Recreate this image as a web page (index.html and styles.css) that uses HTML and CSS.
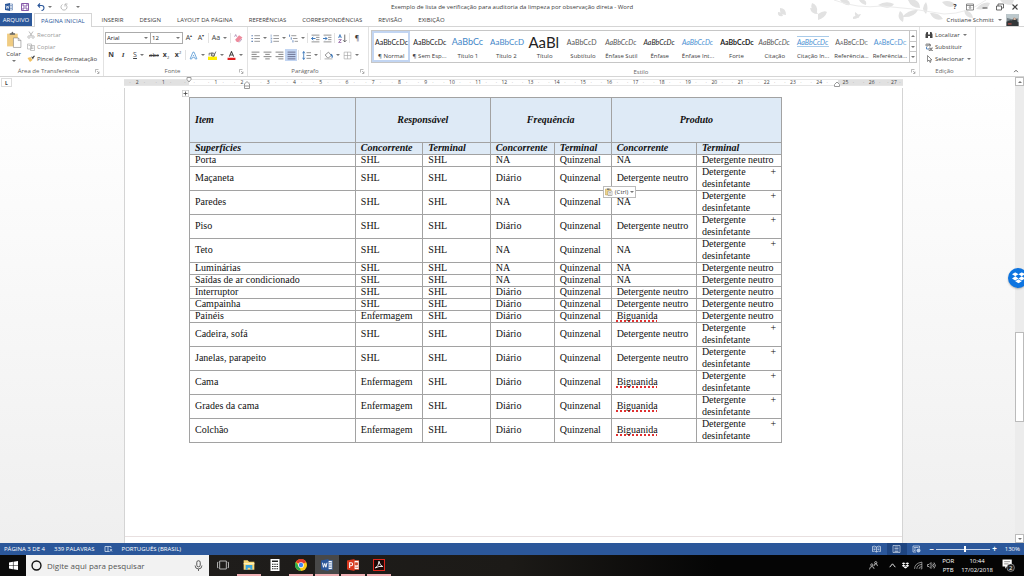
FILE: index.html
```html
<!DOCTYPE html>
<html lang="pt-BR">
<head>
<meta charset="utf-8">
<title>Exemplo de lista de verificação - Word</title>
<link rel="stylesheet" href="styles.css">
</head>
<body>
<svg class="defs" aria-hidden="true">
  <symbol id="lines-left" viewBox="0 0 16 16"><path d="M1 2h14M1 6h9M1 10h14M1 14h9" stroke="#666" stroke-width="1.4"/></symbol>
  <symbol id="word" viewBox="0 0 16 16"><path d="M9 2h6v12H9z" fill="#fff" stroke="#2b579a"/><path d="M10 5h4M10 8h4M10 11h4" stroke="#2b579a"/><path d="M0 2l10-2v16L0 14z" fill="#2b579a"/><path d="M2 5l1.300 6L5 6l1.500 5L8 5" fill="none" stroke="#fff" stroke-width="1.300"/></symbol>
  <symbol id="dropbox" viewBox="0 0 20 18"><path d="M5 0l5 3.200-5 3.200L0 3.200zM15 0l5 3.200-5 3.200-5-3.200zM5 6.400l5 3.200-5 3.200-5-3.200zM15 6.400l5 3.200-5 3.200-5-3.200zM10 10.800l5 3.200-5 3.200-5-3.200z" fill="#fff"/></symbol>
  <symbol id="launcher" viewBox="0 0 10 10"><path d="M1 7V1h6M4 4l4 4M8 5v4H4" fill="none" stroke="#777"/></symbol>
</svg>

<header class="window-head">
  <svg class="foliage" viewBox="0 0 260 27" aria-hidden="true">
    <g fill="#e2e2e2">
      <path d="M16 8q6 0 6 7q-7 0-6-7M14 12q4 0 5 4q-6 1-5-4M48 3q6 2 5 9q-8-2-5-9M46 8q5 0 8 6q-7 0-8-6M54 14q6-4 9-2q-2 6-9 8zM91 12q4 2 4 6q-5-1-4-6M89 17q5-3 8-3q-2 5-8 5M76 0q4 6 10 5q0-4-3-5zM95 0q2 4 7 5q1-4-2-5z"/>
      <path d="M114 5q8-5 16-1q-5 7-16 1M136 11q5 3 3 11q-7-4-3-11M138 17q7-8 16-7q-4 8-16 7M144 0q3 8 12 8q0-6-5-8zM162 2q3 6 0 12q-6-5 0-12M166 13q9-1 13 6q-9 3-13-6M178 2q8-3 14 3q-8 5-14-3M200 10q8 1 9 8q-8 0-9-8M212 9q7-8 14-6q-2 8-14 6M236 0q3 5 12 5l2-5z"/>
    </g>
    <path d="M70 0q24 9 48 6q30 2 62 8q23 0 42-14" fill="none" stroke="#ececec"/>
  </svg>
  <div class="titlebar">
    <div class="quick">
      <svg viewBox="0 0 16 16"><use href="#word"/></svg>
      <button aria-label="Salvar"><svg viewBox="0 0 16 16"><path d="M1 1h14v14H1zM4 1v5h8V1M4 15v-5h8v5" fill="none" stroke="#7a4aa0" stroke-width="1.800"/></svg></button>
      <button class="wide" aria-label="Desfazer"><svg viewBox="0 0 16 16"><path d="M6 1L2 5l4 4M2 5h7q5 0 5 5t-5 5" fill="none" stroke="#2b579a" stroke-width="2.200"/></svg><i class="caret"></i></button>
      <button aria-label="Repetir"><svg viewBox="0 0 16 16"><path d="M5 3a6 6 0 1 0 6 0M10 7V2h5" fill="none" stroke="#aaa" stroke-width="1.600"/></svg></button>
      <button aria-label="Personalizar"><i class="caret"></i></button>
    </div>
    <h1>Exemplo de lista de verificação para auditoria da limpeza por observação direta - Word</h1>
    <div class="winbtns">
      <button aria-label="Ajuda"><b>?</b></button>
      <button aria-label="Opções da faixa"><svg viewBox="0 0 16 16"><path d="M1 2h14v12H1zM1 5h14M8 12V7M6 9l2-2 2 2" fill="none" stroke="#555" stroke-width="1.300"/></svg></button>
      <button aria-label="Minimizar"><svg viewBox="0 0 16 16"><path d="M3 10h10" stroke="#444" stroke-width="2"/></svg></button>
      <button aria-label="Restaurar"><svg viewBox="0 0 16 16"><path d="M1 6h10v8H1zM4 6V2h11v8h-4" fill="none" stroke="#444" stroke-width="1.600"/></svg></button>
      <button aria-label="Fechar"><svg viewBox="0 0 16 16"><path d="M3 3l10 10M13 3L3 13" stroke="#444" stroke-width="2.200"/></svg></button>
    </div>
  </div>
  <nav class="tabs">
    <button class="file">ARQUIVO</button>
    <button class="active">PÁGINA INICIAL</button>
    <button>INSERIR</button>
    <button>DESIGN</button>
    <button>LAYOUT DA PÁGINA</button>
    <button>REFERÊNCIAS</button>
    <button>CORRESPONDÊNCIAS</button>
    <button>REVISÃO</button>
    <button>EXIBIÇÃO</button>
    <div class="user"><span>Cristiane Schmitt</span><i class="caret"></i>
      <svg viewBox="0 0 26 26"><path d="M0 0h26v26H0z" fill="#768288"/><path d="M0 0h26v9L14 12 0 8z" fill="#bcc8cc"/><path d="M0 17q7-5 12-3l4-6q6 0 7 8l3 2v8H0z" fill="#33383a"/><path d="M15 8h5v5h-5z" fill="#d9b6a2"/><path d="M3 20h8v3H3z" fill="#a54a45"/></svg>
    </div>
  </nav>
</header>

<section class="ribbon">
  <div class="group clip">
    <div class="body">
      <button class="paste"><svg viewBox="0 0 30 32"><path d="M2 5h20v24H2z" fill="#f0cc82"/><path d="M7 7V4h3q2-5 4 0h3v3z" fill="#666"/><path d="M14 13h9l5 5v13H14z" fill="#fff" stroke="#777"/><path d="M23 13v5h5" fill="none" stroke="#777"/></svg><span>Colar</span><i class="caret"></i></button>
      <div class="stack">
        <button class="off"><svg viewBox="0 0 16 16"><path d="M4 1l6 9M12 1L6 10" stroke="#aaa" stroke-width="1.600"/><circle cx="4" cy="12" r="2.500" fill="none" stroke="#aaa" stroke-width="1.400"/><circle cx="12" cy="12" r="2.500" fill="none" stroke="#aaa" stroke-width="1.400"/></svg>Recortar</button>
        <button class="off"><svg viewBox="0 0 16 16"><path d="M1 2h8v10H1zM7 5h8v10H7zM9 8h4M9 11h4M3 5h3" fill="#fff" stroke="#aaa" stroke-width="1.300"/></svg>Copiar</button>
        <button class="brush"><svg viewBox="0 0 16 16"><path d="M1 6l5 8 5-4-4-6z" fill="#f0c060"/><path d="M8 3l4 6 1-3 3-4-2-1-3 3z" fill="#444"/></svg>Pincel de Formatação</button>
      </div>
    </div>
    <div class="caption"><span>Área de Transferência</span><svg><use href="#launcher"/></svg></div>
  </div>

  <div class="group font">
    <div class="body rows">
      <div class="row">
        <label class="pick face"><select aria-label="Fonte"><option>Arial</option></select><i class="caret"></i></label>
        <label class="pick size"><select aria-label="Tamanho"><option>12</option></select><i class="caret"></i></label>
        <button class="tool" aria-label="Aumentar">A<sup>▴</sup></button>
        <button class="tool" aria-label="Diminuir">A<sup>▾</sup></button>
        <hr>
        <button class="tool drop">Aa<i class="caret"></i></button>
        <hr>
        <button class="tool" aria-label="Limpar"><svg viewBox="0 0 16 16"><path d="M2 10l7-8 6 4-7 8H5z" fill="#ed8a9c"/><path d="M1 5l2-4 2 4M9 15l5-6" stroke="#855790" fill="none"/></svg></button>
      </div>
      <div class="row">
        <button class="tool"><b>N</b></button>
        <button class="tool"><em>I</em></button>
        <button class="tool drop"><u>S</u><i class="caret"></i></button>
        <button class="tool small"><s>abc</s></button>
        <button class="tool"><b>x</b><sub>2</sub></button>
        <button class="tool"><b>x</b><sup>2</sup></button>
        <hr>
        <button class="tool drop" aria-label="Efeitos"><svg viewBox="0 0 16 16"><path d="M2 14L7 2h2l5 12h-3l-1-3H6l-1 3zM7 8h2" fill="#fff" stroke="#5b9bd5" stroke-width="1.500"/></svg><i class="caret"></i></button>
        <button class="tool drop" aria-label="Realce"><svg viewBox="0 0 16 16"><path d="M0 10h16v6H0z" fill="#ffee00"/><path d="M2 8V4h4v5M7 2v7h4V4H7M14 1l-4 9" fill="none" stroke="#555" stroke-width="1.400"/></svg><i class="caret"></i></button>
        <button class="tool drop" aria-label="Cor"><svg viewBox="0 0 16 16"><path d="M1 12h14v4H1z" fill="#e02020"/><path d="M4 10l4-9 4 9M5 7h6" fill="none" stroke="#444" stroke-width="1.800"/></svg><i class="caret"></i></button>
      </div>
    </div>
    <div class="caption"><span>Fonte</span><svg><use href="#launcher"/></svg></div>
  </div>

  <div class="group para">
    <div class="body rows">
      <div class="row">
        <button class="tool drop" aria-label="Marcadores"><svg viewBox="0 0 16 16"><path d="M6 3h10M6 8h10M6 13h10" stroke="#777" stroke-width="1.300"/><path d="M1 2h2v2H1zM1 7h2v2H1zM1 12h2v2H1z" fill="#2b579a"/></svg><i class="caret"></i></button>
        <button class="tool drop" aria-label="Numeração"><svg viewBox="0 0 16 16"><path d="M6 3h10M6 8h10M6 13h10" stroke="#777" stroke-width="1.300"/><path d="M2 1v4M1 7h2v2H1M1 12h2v3H1" fill="none" stroke="#4e78b4"/></svg><i class="caret"></i></button>
        <button class="tool drop" aria-label="Vários níveis"><svg viewBox="0 0 16 16"><path d="M4 3h9M7 8h8M10 13h6" stroke="#777" stroke-width="1.300"/><path d="M1 1v4M4 6v4M7 11v4" stroke="#4e78b4" stroke-width="1.500"/></svg><i class="caret"></i></button>
        <hr>
        <button class="tool" aria-label="Diminuir recuo"><svg viewBox="0 0 16 16"><path d="M1 2h14M9 6h6M9 10h6M1 14h14" stroke="#777" stroke-width="1.400"/><path d="M8 8H1M4 5L1 8l3 3" fill="none" stroke="#2b6cb5" stroke-width="1.600"/></svg></button>
        <button class="tool" aria-label="Aumentar recuo"><svg viewBox="0 0 16 16"><path d="M1 2h14M9 6h6M9 10h6M1 14h14" stroke="#777" stroke-width="1.400"/><path d="M0 8h7M4 5l3 3-3 3" fill="none" stroke="#2b6cb5" stroke-width="1.600"/></svg></button>
        <hr>
        <button class="tool" aria-label="Classificar"><svg viewBox="0 0 16 16"><path d="M12 1v13M9 11l3 3 3-3" fill="none" stroke="#555" stroke-width="1.500"/><path d="M1 7l2.500-6L6 7M2 5h3" fill="none" stroke="#2b6cb5" stroke-width="1.400"/><path d="M1 10h5l-5 5h5" fill="none" stroke="#8b55a0" stroke-width="1.400"/></svg></button>
        <hr>
        <button class="tool">¶</button>
      </div>
      <div class="row">
        <button class="tool" aria-label="Esquerda"><svg><use href="#lines-left"/></svg></button>
        <button class="tool" aria-label="Centro"><svg viewBox="0 0 16 16"><path d="M1 2h14M4 6h8M1 10h14M4 14h8" stroke="#666" stroke-width="1.400"/></svg></button>
        <button class="tool" aria-label="Direita"><svg viewBox="0 0 16 16"><path d="M1 2h14M6 6h9M1 10h14M6 14h9" stroke="#666" stroke-width="1.400"/></svg></button>
        <button class="tool on" aria-label="Justificar"><svg viewBox="0 0 16 16"><path d="M1 2h14M1 6h14M1 10h14M1 14h14" stroke="#557" stroke-width="1.400"/></svg></button>
        <hr>
        <button class="tool drop" aria-label="Espaçamento"><svg viewBox="0 0 16 16"><path d="M8 3h8M8 8h8M8 13h8" stroke="#777" stroke-width="1.400"/><path d="M3 1v14M1 4l2-3 2 3M1 12l2 3 2-3" fill="none" stroke="#2b6cb5" stroke-width="1.400"/></svg><i class="caret"></i></button>
        <hr>
        <button class="tool drop" aria-label="Sombreamento"><svg viewBox="0 0 16 16"><path d="M2 7l6-5 5 6-6 5z" fill="#fff" stroke="#777" stroke-width="1.400"/><path d="M12 6q4 2 2 6" fill="none" stroke="#2b6cb5" stroke-width="2"/><path d="M1 14h14" stroke="#bbb" stroke-width="2"/></svg><i class="caret"></i></button>
        <button class="tool drop" aria-label="Bordas"><svg viewBox="0 0 16 16"><path d="M2 2h12v12H2zM8 2v12M2 8h12" fill="none" stroke="#999"/></svg><i class="caret"></i></button>
      </div>
    </div>
    <div class="caption"><span>Parágrafo</span><svg><use href="#launcher"/></svg></div>
  </div>

  <div class="group styles">
    <div class="body gallery">
      <button class="chosen"><span class="pv">AaBbCcDc</span><span>¶ Normal</span></button>
      <button><span class="pv">AaBbCcDc</span><span>¶ Sem Esp...</span></button>
      <button><span class="pv h1">AaBbCc</span><span>Título 1</span></button>
      <button><span class="pv h2">AaBbCcD</span><span>Título 2</span></button>
      <button><span class="pv ttl">AaBl</span><span>Título</span></button>
      <button><span class="pv sub">AaBbCcD</span><span>Subtítulo</span></button>
      <button><span class="pv it soft">AaBbCcDc</span><span>Ênfase Sutil</span></button>
      <button><span class="pv it">AaBbCcDc</span><span>Ênfase</span></button>
      <button><span class="pv it blue">AaBbCcDc</span><span>Ênfase Int...</span></button>
      <button><span class="pv bold">AaBbCcDc</span><span>Forte</span></button>
      <button><span class="pv it soft">AaBbCcDc</span><span>Citação</span></button>
      <button><span class="pv it blue ruled">AaBbCcDc</span><span>Citação In...</span></button>
      <button><span class="pv caps soft">AaBbCcDc</span><span>Referência...</span></button>
      <button><span class="pv caps blue">AaBbCcDc</span><span>Referência...</span></button>
      <div class="more"><button aria-label="Acima"><i class="caret up"></i></button><button aria-label="Abaixo"><i class="caret"></i></button><button aria-label="Mais"><i class="caret lined"></i></button></div>
    </div>
    <div class="caption"><span>Estilo</span><svg><use href="#launcher"/></svg></div>
  </div>

  <div class="group edit">
    <div class="body stack">
      <button><svg viewBox="0 0 16 16"><path d="M1 14V7l2-5h3v5h4V2h3l2 5v7h-5v-4H6v4z" fill="#444"/></svg>Localizar<i class="caret"></i></button>
      <button><svg viewBox="0 0 16 16"><path d="M2 6V2h4v4H2M8 0v6h3V3H8M8 15v-5h3v5H8M16 10h-3v5h3" fill="none" stroke="#555" stroke-width="1.300"/><path d="M3 8v4h4" fill="none" stroke="#2b6cb5" stroke-width="1.500"/></svg>Substituir</button>
      <button><svg viewBox="0 0 16 16"><path d="M5 1v12l3-3 2 5 2-1-2-4h4z" fill="#fff" stroke="#555" stroke-width="1.300"/></svg>Selecionar<i class="caret"></i></button>
    </div>
    <div class="caption"><span>Edição</span></div>
  </div>
  <button class="collapse" aria-label="Recolher"><svg viewBox="0 0 16 16"><path d="M3 11l5-5 5 5" fill="none" stroke="#555" stroke-width="2.400"/></svg></button>
</section>

<main class="work">
  <div class="rulerbar">
    <button class="tabstop" aria-label="Tabulação">L</button>
    <div class="ruler">
      <span>2</span><span>1</span><span class="zero"></span><span>1</span><span>2</span><span>3</span><span>4</span><span>5</span><span>6</span><span>7</span><span>8</span><span>9</span><span>10</span><span>11</span><span>12</span><span>13</span><span>14</span><span>15</span><span>16</span><span>17</span><span>18</span><span>19</span><span>20</span><span>21</span><span>22</span><span>23</span><span>24</span><span>25</span><span>26</span><span class="end">27</span>
      <svg class="mark first" viewBox="0 0 6 6"><path d="M1 0.500h4v2L3 5 1 2.500z"/></svg>
      <svg class="mark hang" viewBox="0 0 6 8"><path d="M3 0.500L5.500 3v4.500h-5V3zM.5 5h5"/></svg>
      <svg class="mark right" viewBox="0 0 6 6"><path d="M3 1l2.500 2.500v2h-5v-2z"/></svg>
    </div>
  </div>
  <div class="canvas">
    <article class="page">
      <div class="tablewrap">
        <svg class="handle" viewBox="0 0 14 14"><path d="M.5.500h13v13H.5z" fill="#fff" stroke="#999"/><path d="M7 3v8M3 7h8" fill="none" stroke="#444" stroke-width="1.600"/></svg>
        <table>
          <colgroup><col class="c1"><col class="c2"><col class="c2"><col class="c3"><col class="c4"><col class="c5"><col class="c5"></colgroup>
          <thead>
            <tr class="tall"><th>Item</th><th colspan="2">Responsável</th><th colspan="2">Frequência</th><th colspan="2">Produto</th></tr>
            <tr><th>Superfícies</th><th>Concorrente</th><th>Terminal</th><th>Concorrente</th><th>Terminal</th><th>Concorrente</th><th>Terminal</th></tr>
          </thead>
          <tbody>
            <tr><td>Porta</td><td>SHL</td><td>SHL</td><td>NA</td><td>Quinzenal</td><td>NA</td><td>Detergente neutro</td></tr>
            <tr><td>Maçaneta</td><td>SHL</td><td>SHL</td><td>Diário</td><td>Quinzenal</td><td>Detergente neutro</td><td><div class="just">Detergente <span>+</span></div>desinfetante</td></tr>
            <tr><td>Paredes</td><td>SHL</td><td>SHL</td><td>NA</td><td>Quinzenal</td><td>NA</td><td><div class="just">Detergente <span>+</span></div>desinfetante</td></tr>
            <tr><td>Piso</td><td>SHL</td><td>SHL</td><td>Diário</td><td>Quinzenal</td><td>Detergente neutro</td><td><div class="just">Detergente <span>+</span></div>desinfetante</td></tr>
            <tr><td>Teto</td><td>SHL</td><td>SHL</td><td>NA</td><td>Quinzenal</td><td>NA</td><td><div class="just">Detergente <span>+</span></div>desinfetante</td></tr>
            <tr><td>Luminárias</td><td>SHL</td><td>SHL</td><td>NA</td><td>Quinzenal</td><td>NA</td><td>Detergente neutro</td></tr>
            <tr><td>Saídas de ar condicionado</td><td>SHL</td><td>SHL</td><td>NA</td><td>Quinzenal</td><td>NA</td><td>Detergente neutro</td></tr>
            <tr><td>Interruptor</td><td>SHL</td><td>SHL</td><td>Diário</td><td>Quinzenal</td><td>Detergente neutro</td><td>Detergente neutro</td></tr>
            <tr><td>Campainha</td><td>SHL</td><td>SHL</td><td>Diário</td><td>Quinzenal</td><td>Detergente neutro</td><td>Detergente neutro</td></tr>
            <tr><td>Painéis</td><td>Enfermagem</td><td>SHL</td><td>Diário</td><td>Quinzenal</td><td><span class="typo">Biguanida</span></td><td>Detergente neutro</td></tr>
            <tr><td>Cadeira, sofá</td><td>SHL</td><td>SHL</td><td>Diário</td><td>Quinzenal</td><td>Detergente neutro</td><td><div class="just">Detergente <span>+</span></div>desinfetante</td></tr>
            <tr><td>Janelas, parapeito</td><td>SHL</td><td>SHL</td><td>Diário</td><td>Quinzenal</td><td>Detergente neutro</td><td><div class="just">Detergente <span>+</span></div>desinfetante</td></tr>
            <tr><td>Cama</td><td>Enfermagem</td><td>SHL</td><td>Diário</td><td>Quinzenal</td><td><span class="typo">Biguanida</span></td><td><div class="just">Detergente <span>+</span></div>desinfetante</td></tr>
            <tr><td>Grades da cama</td><td>Enfermagem</td><td>SHL</td><td>Diário</td><td>Quinzenal</td><td><span class="typo">Biguanida</span></td><td><div class="just">Detergente <span>+</span></div>desinfetante</td></tr>
            <tr><td>Colchão</td><td>Enfermagem</td><td>SHL</td><td>Diário</td><td>Quinzenal</td><td><span class="typo">Biguanida</span></td><td><div class="just">Detergente <span>+</span></div>desinfetante</td></tr>
          </tbody>
        </table>
        <button class="pastetag"><svg viewBox="0 0 16 16"><path d="M1 2h11v12H1z" fill="#f0d58a" stroke="#b89a4a"/><path d="M4 1h5v3H4z" fill="#777"/><path d="M6 6h8v9H6zM8 9h4M8 12h4" fill="#fff" stroke="#777"/></svg>(Ctrl)<i class="caret"></i></button>
      </div>
    </article>
  </div>
  <div class="scroll">
    <button aria-label="Rolar para cima"><i class="caret up"></i></button>
    <div class="track"><div class="thumb"></div></div>
    <button aria-label="Rolar para baixo"><i class="caret"></i></button>
  </div>
  <button class="dropbtn" aria-label="Dropbox"><svg viewBox="0 0 20 18"><use href="#dropbox"/></svg></button>
</main>

<footer class="status">
  <span>PÁGINA 3 DE 4</span><span>339 PALAVRAS</span>
  <svg viewBox="0 0 18 16"><path d="M8 3H2v10h6M8 3v10M8 3h6v3M8 13h3M12 8l4 5M16 8l-4 5" fill="none" stroke="#dbe5f3" stroke-width="1.500"/></svg>
  <span>PORTUGUÊS (BRASIL)</span>
  <div class="views">
    <button aria-label="Leitura"><svg viewBox="0 0 18 16"><path d="M9 4Q5 1 1 3v10q4-2 8 1 4-3 8-1V3q-4-2-8 1zM9 4v10M3 6h4M3 9h4M11 6h4M11 9h4" fill="none" stroke="#dbe5f3" stroke-width="1.400"/></svg></button>
    <button class="on" aria-label="Impressão"><svg viewBox="0 0 18 16"><path d="M2 1h14v14H2zM5 4h8M5 7h8M5 10h8M5 13h8" fill="none" stroke="#dbe5f3" stroke-width="1.300"/></svg></button>
    <button aria-label="Web"><svg viewBox="0 0 18 16"><path d="M8 14H2V2h13v5M4 5h9M4 8h4M4 11h3" fill="none" stroke="#dbe5f3" stroke-width="1.400"/><circle cx="13" cy="11" r="4" fill="#b8cbe6"/></svg></button>
  </div>
  <div class="zoom"><b>−</b><input type="range" min="10" max="160" value="90" aria-label="Zoom"><b>+</b></div>
  <span class="pct">130%</span>
</footer>

<footer class="taskbar">
  <button class="start" aria-label="Iniciar"><svg viewBox="0 0 16 16"><path d="M0 2.500L7 1.500v6H0zM8 1.300L16 0v7.500H8zM0 8.500h7v6L0 13.500zM8 8.500h8V16l-8-1.300z" fill="#fff"/></svg></button>
  <label class="search">
    <svg viewBox="0 0 16 16"><circle cx="8" cy="8" r="6.500" fill="none" stroke="#111" stroke-width="2"/></svg>
    <input type="text" placeholder="Digite aqui para pesquisar">
    <svg viewBox="0 0 16 16"><rect x="5.500" y="1" width="5" height="9" rx="2.500" fill="none" stroke="#444" stroke-width="1.300"/><path d="M3 8q0 5 5 5t5-5M8 13v3" fill="none" stroke="#444" stroke-width="1.200"/></svg>
  </label>
  <div class="apps">
    <button class="idle" aria-label="Visão de tarefas"><svg viewBox="0 0 18 16"><path d="M4 2h10v12H4zM2 4H0.700v8H2M16 4h1.300v8H16" fill="none" stroke="#ccc" stroke-width="1.300"/></svg></button>
    <button aria-label="Explorador"><svg viewBox="0 0 18 16"><path d="M1 1h6l2 2h8v12H1z" fill="#f8d775"/><path d="M4 8h10v7h-3v-3H7v3H4z" fill="#36a3e0"/><path d="M1 5h16v2H1z" fill="#fff0b5"/></svg></button>
    <button class="idle" aria-label="Calculadora"><svg viewBox="0 0 16 16"><path d="M2 0h12v16H2z" fill="#fff"/><path d="M4 2h8v2H4z" fill="#222"/><path d="M4 7h8M4 10h8M4 13h8" stroke="#222" stroke-width="1.600" stroke-dasharray="2 1"/></svg></button>
    <button aria-label="Chrome"><svg viewBox="0 0 16 16"><circle cx="8" cy="8" r="8" fill="#fbc916"/><path d="M8 8L1 4a8 8 0 0 1 14 0z" fill="#e33b2e"/><path d="M1 4l5 7 2 5A8 8 0 0 1 1 4z" fill="#2da94f"/><circle cx="8" cy="8" r="3.800" fill="#fff"/><circle cx="8" cy="8" r="2.900" fill="#4285f4"/></svg></button>
    <button class="front" aria-label="Word"><svg viewBox="0 0 16 16"><use href="#word"/></svg></button>
    <button aria-label="PowerPoint"><svg viewBox="0 0 16 16"><path d="M9 2h7v12H9z" fill="#fff" stroke="#d24726"/><path d="M11 5h3v3h-3zM11 11h4" fill="#d24726" stroke="#d24726"/><path d="M0 2l10-2v16L0 14z" fill="#d9381e"/><path d="M3.500 12V5h2q2 0 2 2t-2 2h-2" fill="none" stroke="#fff" stroke-width="1.400"/></svg></button>
    <button aria-label="Acrobat"><svg viewBox="0 0 16 16"><path d="M.7.700h14.600v14.600H.7z" fill="#1c0807" stroke="#e0261b" stroke-width="1.400"/><path d="M3 12q5-3 5-9 1 6 5 7-5-1-10 2" fill="none" stroke="#fff" stroke-width="1.200"/></svg></button>
  </div>
  <div class="tray">
    <svg viewBox="0 0 16 16"><circle cx="5" cy="7" r="2" fill="none" stroke="#ddd" stroke-width="1.300"/><path d="M1 15q0-5 4-5t4 4M9 9q0-4 3-4t3 4" fill="none" stroke="#ddd" stroke-width="1.300"/><circle cx="12" cy="3" r="2" fill="none" stroke="#ddd" stroke-width="1.300"/></svg>
    <svg class="chev" viewBox="0 0 16 16"><path d="M3 11l5-6 5 6" fill="none" stroke="#eee" stroke-width="1.700"/></svg>
    <svg viewBox="-2 -2 24 22"><use href="#dropbox" width="20" height="18"/></svg>
    <svg viewBox="0 0 16 16"><path d="M1 14Q1 4 14 2M5 14Q5 7 14 6M9 14q0-4 5-4M12 14h2V2" fill="none" stroke="#bbb" stroke-width="1.300"/></svg>
    <svg viewBox="0 0 18 16"><path d="M1 6h3l4-4v12l-4-4H1zM10 6q2 2 0 4M12 4q4 4 0 8M14 2q6 6 0 12" fill="none" stroke="#ddd" stroke-width="1.300"/></svg>
    <div class="two"><span>POR</span><span>PTB</span></div>
    <div class="two clock"><span>10:44</span><span>17/02/2018</span></div>
    <svg class="note" viewBox="0 0 24 24"><path d="M1 1h17v13H9l-3 4v-4H1z" fill="#fff"/><path d="M4 5h11M4 9h8" stroke="#333"/><circle cx="16" cy="16" r="7" fill="#222" stroke="#ccc"/><text x="16" y="20" text-anchor="middle" fill="#fff" font-size="11">2</text></svg>
  </div>
</footer>
</body>
</html>
```
FILE: styles.css
```css
* { box-sizing: border-box; }
body {
  margin: 0;
  height: 100vh;
  display: flex;
  flex-direction: column;
  overflow: hidden;
  background: #fff;
  color: #3c3c3c;
  font: 6px/8px "Open Sans", "Noto Sans", sans-serif;
}
button {
  margin: 0; padding: 0; border: 0;
  background: none; color: inherit; font: inherit;
  display: flex; align-items: center; justify-content: center;
  white-space: nowrap;
}
svg { display: block; flex: none; }
.defs { position: absolute; width: 0; height: 0; }
.caret {
  flex: none;
  width: 0; height: 0;
  border: 1px solid transparent;
  border-width: 2px 2px 0;
  border-top-color: #777;
}
.caret.up { border-width: 0 2px 2px; border-bottom-color: #777; }
.caret.lined { box-shadow: 0 -3px 0 -1px #888; }

/* title bar and tabs */
.window-head { position: relative; flex: none; }
.foliage { position: absolute; right: 0; top: 0; width: 260px; height: 27px; }
.titlebar {
  position: relative;
  display: grid;
  grid-template-columns: 1fr auto 1fr;
  align-items: center;
  height: 13px;
}
.titlebar h1 { margin: 0; font: inherit; }
.titlebar svg { width: 8px; height: 8px; }
.quick { display: flex; gap: 8px; padding-left: 5px; }
.quick .wide { gap: 3px; }
.winbtns { display: flex; justify-content: flex-end; gap: 7px; padding-right: 5px; }
.winbtns b { width: 8px; font-size: 7px; }
.tabs {
  position: relative;
  display: flex;
  height: 14px;
  border-bottom: 1px solid #d5d5d5;
}
.tabs button { padding: 0 8px; }
.tabs .file { width: 32px; padding: 0; background: #2b579a; color: #fff; }
.tabs .active {
  height: 14px; margin: 0 2px; padding: 0 6px;
  border: 1px solid #d5d5d5; border-bottom: 0;
  background: #fff; color: #2b579a;
}
.user { margin-left: auto; display: flex; align-items: center; gap: 4px; padding-right: 5px; }
.user svg { width: 13px; height: 12px; }

/* ribbon */
.ribbon {
  flex: none;
  display: flex;
  height: 50px;
  border-bottom: 1px solid #d5d5d5;
}
.group {
  display: flex;
  flex-direction: column;
  border-right: 1px solid #e2e2e2;
}
.body { flex: 1; display: flex; }
.caption {
  display: grid;
  grid-template-columns: 1fr 6px;
  align-items: center;
  height: 10px;
  padding: 0 2px;
  text-align: center;
  color: #666;
}
.caption span { white-space: nowrap; }
.caption svg { width: 5px; height: 5px; }
.clip { width: 104px; }
.font { width: 144px; }
.para { width: 121px; }
.styles { flex: 1; min-width: 0; }
.edit { width: 56px; }
.paste { width: 27px; flex-direction: column; justify-content: flex-start; padding-top: 4px; gap: 2px; }
.paste svg { width: 16px; height: 17px; }
.stack { display: flex; flex-direction: column; padding-top: 2px; }
.stack button { height: 12px; gap: 2px; justify-content: flex-start; }
.stack svg { width: 8px; height: 8px; }
.edit .stack { padding-left: 5px; }
.edit .caret { margin-left: 1px; }
.off { color: #999; }
.rows { flex-direction: column; gap: 5px; padding: 5px 1px 0; }
.row { display: flex; height: 12px; }
.row hr { margin: 1px; width: 1px; border: 0; background: #e2e2e2; flex: none; }
.tool { width: 12px; height: 12px; font-size: 7px; }
.tool.drop { width: 19px; gap: 3px; }
.tool.small { font-size: 6px; }
.tool svg { width: 9px; height: 9px; }
.tool sup, .tool sub { font-size: 4px; line-height: 4px; }
.tool sup { align-self: flex-start; padding-top: 2px; }
.tool sub { align-self: flex-end; padding-bottom: 1px; }
.tool em { font-family: "Liberation Serif", serif; font-weight: bold; }
.tool.on { background: #c2d5f2; }
.pick {
  display: flex; align-items: center;
  padding-right: 2px;
  border: 1px solid #ababab;
  background: #fff;
}
.pick select {
  flex: 1; min-width: 0; padding: 0 1px;
  border: 0; background: none; appearance: none;
  color: #222; font: inherit;
}
.face { width: 46px; }
.size { width: 33px; margin-left: -1px; }

.gallery {
  flex: none;
  height: 33px;
  margin: 3px 2px 4px;
  border: 1px solid #c6c6c6;
}
.gallery > button {
  flex: 1 1 0; min-width: 0;
  flex-direction: column;
  padding: 2px 3px;
  justify-content: space-between;
}
.gallery .chosen { box-shadow: inset 0 0 0 2px #c2d5f2; }
.pv {
  width: 100%; height: 17px;
  color: #222;
  font: 7px/18px Lato, "Open Sans", sans-serif;
  text-align: left;
}
.pv.h1 { font-size: 9px; color: #3f86c8; }
.pv.h2 { font-size: 8px; color: #3f86c8; }
.pv.ttl { font-size: 15px; }
.pv.sub, .pv.soft { color: #555; }
.pv.it { font-style: italic; }
.pv.bold { font-weight: bold; }
.pv.blue { color: #4a90d2; }
.pv.caps { font-variant: small-caps; }
.pv.ruled { height: 11px; margin: 3px 0; line-height: 10px; border: 1px solid #a9cbe9; border-width: 1px 0; }
.more { display: flex; flex-direction: column; width: 7px; border-left: 1px solid #c6c6c6; }
.more button { flex: 1; }
.more button + button { border-top: 1px solid #c6c6c6; }
.collapse { margin-left: auto; padding: 0 5px 2px 0; width: 48px; align-items: flex-end; justify-content: flex-end; }
.collapse svg { width: 6px; height: 6px; }

/* document area */
.work {
  position: relative;
  flex: 1;
  min-height: 0;
  display: grid;
  grid-template: 11px 1fr / 1fr 9px;
}
.rulerbar, .canvas {
  grid-column: 1;
  display: grid;
  grid-template-columns: 124fr 779fr 112fr;
}
.rulerbar { align-items: center; }
.tabstop { width: 11px; height: 9px; margin-left: 1px; border: 1px solid #ddd; font-size: 5px; font-weight: bold; }
.ruler {
  position: relative;
  grid-column: 2;
  display: flex;
  height: 7px;
  background: linear-gradient(90deg, #e1e1e1 8.4%, #fff 8.4% 91.6%, #e1e1e1 91.6%);
  border: 1px solid #e6e6e6;
  border-width: 1px 0;
  font-size: 5px;
  line-height: 5px;
}
.ruler span { flex: 10 1 0; display: flex; justify-content: space-evenly; text-align: center; }
.ruler span::before, .ruler span::after { content: "·"; color: #999; }
.ruler .end { flex-grow: 7; }
.mark { position: absolute; width: 6px; fill: #fff; stroke: #999; stroke-width: 1; }
.mark.first { left: 8%; top: -3px; height: 6px; }
.mark.hang { left: 15.4%; top: 1px; height: 8px; }
.mark.right { left: 91.2%; top: 1px; height: 6px; }
.canvas { background: linear-gradient(#fff, #f8f8f8 45%, #efefef); }
.page {
  grid-column: 2;
  padding: 9px 0 0 64px;
  border: 1px solid #d4d4d4;
  border-width: 0 1px;
  background: linear-gradient(#e8e0e0, #e8e0e0) 0 calc(100% - 6px) / 100% 1px no-repeat #fff;
}
.tablewrap { position: relative; width: 83.200%; }
.handle { position: absolute; left: -7px; top: -7px; width: 7px; height: 7px; }
table {
  width: 100%;
  table-layout: fixed;
  border-collapse: separate;
  border-spacing: 0;
  border: 1px solid #a2a2a2;
  border-width: 0 1px 1px 0;
  color: #111;
  font: 10px/12px "Liberation Serif", serif;
}
.c1 { width: 28%; }
.c2 { width: 11.400%; }
.c3 { width: 10.800%; }
.c4 { width: 9.600%; }
.c5 { width: 14.400%; }
th, td {
  height: 12px;
  padding: 0 5px 0 6px;
  text-align: left;
  vertical-align: middle;
  white-space: nowrap;
  box-shadow: inset 1px 1px #a2a2a2;
}
th { background: #deeaf6; font-style: italic; }
.tall th { height: 45px; }
.tall th + th { text-align: center; }
.just { display: flex; justify-content: space-between; }
.typo { text-decoration: underline dotted #e03030 2px; text-underline-offset: 1px; text-decoration-skip-ink: none; }
.pastetag {
  position: absolute;
  left: 69.800%; top: 89px;
  gap: 2px;
  width: 33px; height: 12px;
  border: 1px solid #bbb;
  background: #fff;
}
.pastetag svg { width: 8px; height: 8px; }
.scroll {
  grid-column: 2; grid-row: 1 / 3;
  display: flex; flex-direction: column;
  background: #ececec;
}
.scroll button { height: 9px; border: 1px solid #bbb; background: #fff; }
.track { flex: 1; display: grid; grid-template-rows: 247fr 90fr 112fr; }
.thumb { grid-row: 2; border: 1px solid #bbb; background: #fff; }
.dropbtn {
  position: absolute; right: -4px; top: 41%;
  width: 20px; height: 20px;
  border-radius: 50%;
  background: #0d74e0;
  box-shadow: 0 1px 2px #0004;
}
.dropbtn svg { width: 13px; height: 12px; }

/* status bar */
.status {
  flex: none;
  display: flex; align-items: center; gap: 9px;
  height: 12px;
  padding: 0 4px;
  background: #2b579a;
  color: #fff;
}
.status svg { width: 9px; height: 8px; }
.views { margin-left: auto; display: flex; }
.views button { width: 20px; height: 12px; }
.views .on { background: #1e4581; }
.zoom { display: flex; align-items: center; gap: 2px; margin: 0 -1px 0 -6px; font-size: 8px; }
.zoom input { appearance: none; width: 54px; height: 8px; margin: 0; background: linear-gradient(#c9d6ea, #c9d6ea) center / 100% 1px no-repeat; }
.zoom input::-webkit-slider-thumb { appearance: none; width: 2px; height: 6px; background: #fff; }

/* taskbar */
.taskbar { flex: none; display: flex; height: 21px; background: linear-gradient(90deg, #211f1e, #1c1a17 50%, #050505 70%); color: #fff; }
.start { width: 26px; background: #0a0a0a; }
.start svg { width: 9px; height: 9px; }
.search { display: flex; align-items: center; gap: 5px; width: 183px; padding: 0 5px; background: #f2f2f2; }
.search svg { width: 11px; height: 11px; }
.search input { flex: 1; min-width: 0; padding: 0; border: 0; background: none; font: 8px/10px "Open Sans", sans-serif; }
.search input::placeholder { color: #555; }
.apps { display: flex; padding-left: 1px; }
.apps button { width: 24px; margin: 0 1px; border-bottom: 2px solid #f0b0b4; }
.apps .idle { border-color: transparent; }
.apps .front { background: #484848; }
.apps svg { width: 12px; height: 12px; }
.tray { margin-left: auto; display: flex; align-items: center; gap: 4px; padding-right: 9px; }
.tray svg { width: 9px; height: 9px; }
.tray .chev { margin-left: 6px; }
.two { display: flex; flex-direction: column; align-items: center; line-height: 9px; margin-left: 2px; }
.clock { margin: 0 5px 0 3px; }
.tray .note { width: 13px; height: 13px; }
```
